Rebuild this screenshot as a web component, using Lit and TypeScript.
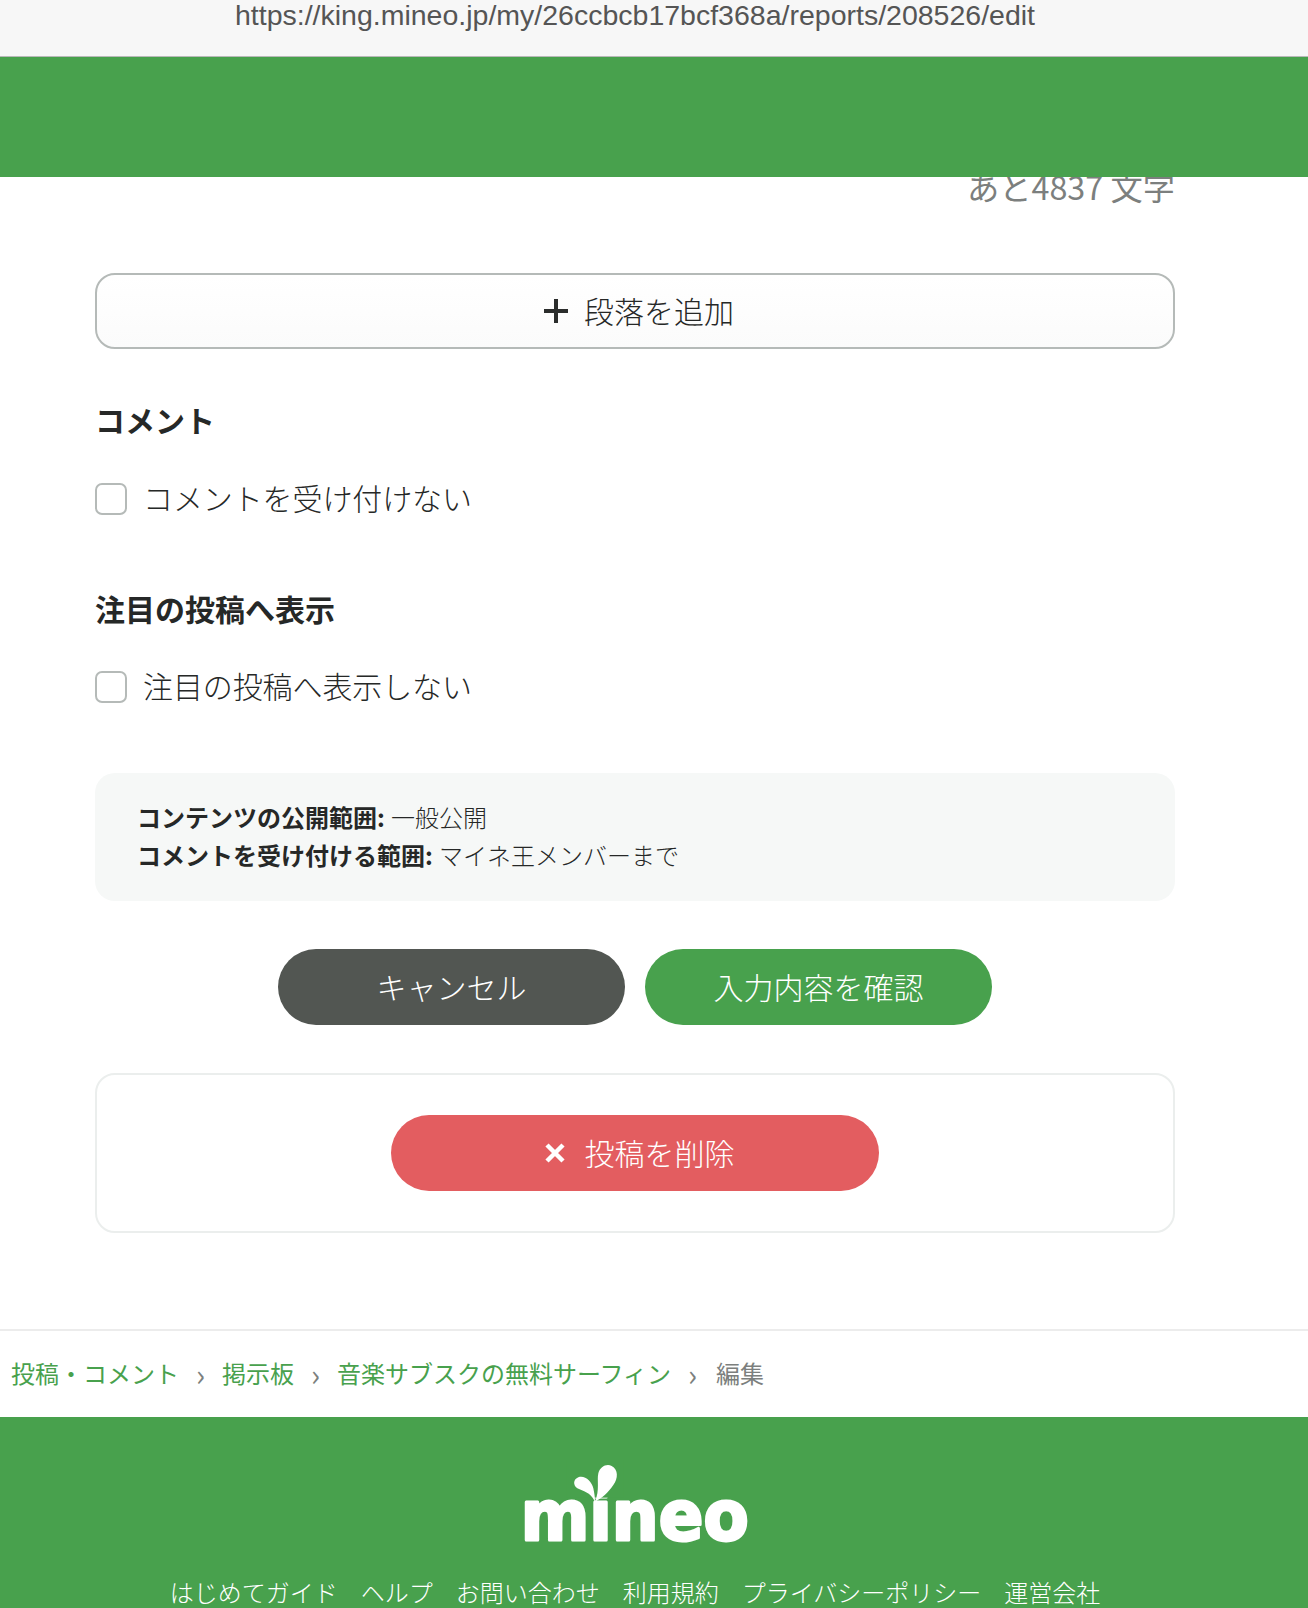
import { LitElement, css, html } from 'lit';
import { customElement } from 'lit/decorators.js';

const crumbs = ['投稿・コメント', '掲示板', '音楽サブスクの無料サーフィン'];
const footerLinks = ['はじめてガイド', 'ヘルプ', 'お問い合わせ', '利用規約', 'プライバシーポリシー', '運営会社'];

@customElement('app-root')
export class AppRoot extends LitElement {
  static override styles = css`
    :host {
      display: block;
      height: 1608px;
      overflow: hidden;
      background: #fff;
      color: #262827;
      font-family: 'Noto Sans CJK JP', 'Noto Sans', sans-serif;
      font-size: 30px;
    }

    .urlbar {
      width: 1270px;
      text-align: center;
      font-family: 'Liberation Sans', sans-serif;
      font-size: 28.5px;
      line-height: 30px;
      color: #555;
    }

    .urlbar-wrap {
      background: #f7f7f7;
      border-bottom: 1px solid #b9b9b9;
      height: 56px;
    }

    .header {
      position: relative;
      z-index: 1;
      height: 120px;
      background: #48a14d;
    }

    .main {
      box-sizing: border-box;
      width: 1270px;
      padding: 0 95px;
    }

    .count {
      margin-top: -10px;
      height: 39px;
      line-height: 38px;
      text-align: right;
      color: #7c7f7e;
      font-size: 32.3px;
    }

    .add {
      box-sizing: border-box;
      margin-top: 67px;
      height: 76px;
      padding: 0 0 0 8px;
      display: flex;
      align-items: center;
      justify-content: center;
      gap: 16px;
      border: 2px solid #b5bab8;
      border-radius: 20px;
      background: linear-gradient(#fff, #fbfbfb);
      font-weight: 300;
    }

    .add span,
    .check span:last-child {
      padding-bottom: 3px;
    }

    .add svg {
      stroke: #2b2d2c;
    }

    .heading {
      margin-top: 54px;
      height: 36px;
      line-height: 32px;
      font-weight: 700;
    }

    .heading.second {
      margin-top: 73px;
    }

    .check {
      margin-top: 40px;
      height: 40px;
      display: flex;
      align-items: center;
      gap: 16px;
      line-height: 37px;
      font-weight: 300;
      letter-spacing: -0.1px;
    }

    .check.second {
      margin-top: 39px;
    }

    .box {
      box-sizing: border-box;
      width: 32px;
      height: 32px;
      border: 2px solid #b5bab8;
      border-radius: 7px;
      background: #fff;
      flex: none;
    }

    .info {
      box-sizing: border-box;
      margin-top: 66px;
      height: 128px;
      padding: 25px 42px;
      border-radius: 20px;
      background: #f6f8f7;
      font-size: 24px;
      line-height: 38px;
      font-weight: 300;
    }

    .info b {
      font-weight: 700;
      margin-right: 1px;
    }

    .actions {
      margin-top: 48px;
      display: flex;
      justify-content: center;
      gap: 20px;
    }

    .pill {
      box-sizing: border-box;
      width: 347px;
      height: 76px;
      display: flex;
      align-items: center;
      justify-content: center;
      border-radius: 38px;
      color: #fff;
      font-weight: 300;
    }

    .pill span {
      padding-bottom: 3px;
    }

    .pill svg {
      stroke: #fff;
    }

    .cancel {
      background: #525652;
    }

    .confirm {
      background: #48a14d;
    }

    .danger-card {
      box-sizing: border-box;
      margin-top: 48px;
      height: 160px;
      padding-top: 40px;
      display: flex;
      justify-content: center;
      border: 2px solid #ebeeed;
      border-radius: 20px;
    }

    .delete {
      width: 488px;
      padding-left: 9px;
      gap: 20px;
      background: #e35d60;
    }

    .divider {
      margin-top: 96px;
      height: 2px;
      background: #ececec;
    }

    .crumbs {
      height: 86px;
      padding-left: 11px;
      display: flex;
      align-items: center;
      font-size: 24px;
      line-height: 34px;
      color: #48a14d;
    }

    .crumbs span {
      padding-bottom: 3px;
    }

    .crumbs .sep {
      width: 43px;
      text-align: center;
      font-size: 30px;
      color: #7c7f7e;
    }

    .crumbs .current {
      margin-left: 2px;
      color: #7c7f7e;
    }

    .footer {
      height: 220px;
      background: #48a14d;
    }

    .footer-inner {
      width: 1270px;
      padding-top: 33px;
      display: flex;
      flex-direction: column;
      align-items: center;
    }

    .logo {
      display: block;
    }

    .logo text {
      font-family: 'DejaVu Sans', sans-serif;
      font-weight: 700;
      font-size: 210px;
      fill: #fff;
      stroke: #fff;
      stroke-width: 9px;
      stroke-linejoin: round;
    }

    .logo .leaf {
      fill: #fff;
    }

    .logo .cover {
      fill: #48a14d;
    }

    .links {
      margin-top: 24px;
      display: flex;
      gap: 23px;
      font-size: 24px;
      line-height: 36px;
      font-weight: 300;
      color: #fff;
    }
  `;

  private renderCrumbs() {
    return crumbs.map((c) => html`<span>${c}</span><span class="sep">›</span>`);
  }

  override render() {
    return html`
      <div class="urlbar-wrap">
        <div class="urlbar">https://king.mineo.jp/my/26ccbcb17bcf368a/reports/208526/edit</div>
      </div>
      <div class="header"></div>

      <div class="main">
        <div class="count">あと4837 文字</div>

        <div class="add">
          <svg width="24" height="24" viewBox="0 0 24 24" fill="none" stroke-width="4">
            <path d="M12 0v24M0 12h24" />
          </svg>
          <span>段落を追加</span>
        </div>

        <div class="heading">コメント</div>
        <label class="check"><span class="box"></span><span>コメントを受け付けない</span></label>

        <div class="heading second">注目の投稿へ表示</div>
        <label class="check second"><span class="box"></span><span>注目の投稿へ表示しない</span></label>

        <div class="info">
          <div><b>コンテンツの公開範囲:</b> 一般公開</div>
          <div><b>コメントを受け付ける範囲:</b> マイネ王メンバーまで</div>
        </div>

        <div class="actions">
          <div class="pill cancel"><span>キャンセル</span></div>
          <div class="pill confirm"><span>入力内容を確認</span></div>
        </div>

        <div class="danger-card">
          <div class="pill delete">
            <svg width="20" height="20" viewBox="0 0 20 20" fill="none" stroke-width="4.5">
              <path d="M2 2l16 16M18 2L2 18" />
            </svg>
            <span>投稿を削除</span>
          </div>
        </div>
      </div>

      <div class="divider"></div>
      <div class="crumbs">${this.renderCrumbs()}<span class="current">編集</span></div>

      <div class="footer">
        <div class="footer-inner">
          <svg class="logo" width="270" height="100" viewBox="0 0 810 300">
            <text x="62" y="271" textLength="684" lengthAdjust="spacingAndGlyphs">mineo</text>
            <rect class="cover" x="200" y="30" width="170" height="113" />
            <path class="leaf" d="M285 155C300 120 290 90 295 70C300 50 320 40 335 48C355 58 355 85 340 105C325 128 305 145 285 155Z" />
            <path class="leaf" d="M285 155C270 125 250 125 232 115C218 105 220 88 235 82C255 75 275 95 280 115C283 130 285 140 285 155Z" />
          </svg>
          <div class="links">${footerLinks.map((l) => html`<span>${l}</span>`)}</div>
        </div>
      </div>
    `;
  }
}
